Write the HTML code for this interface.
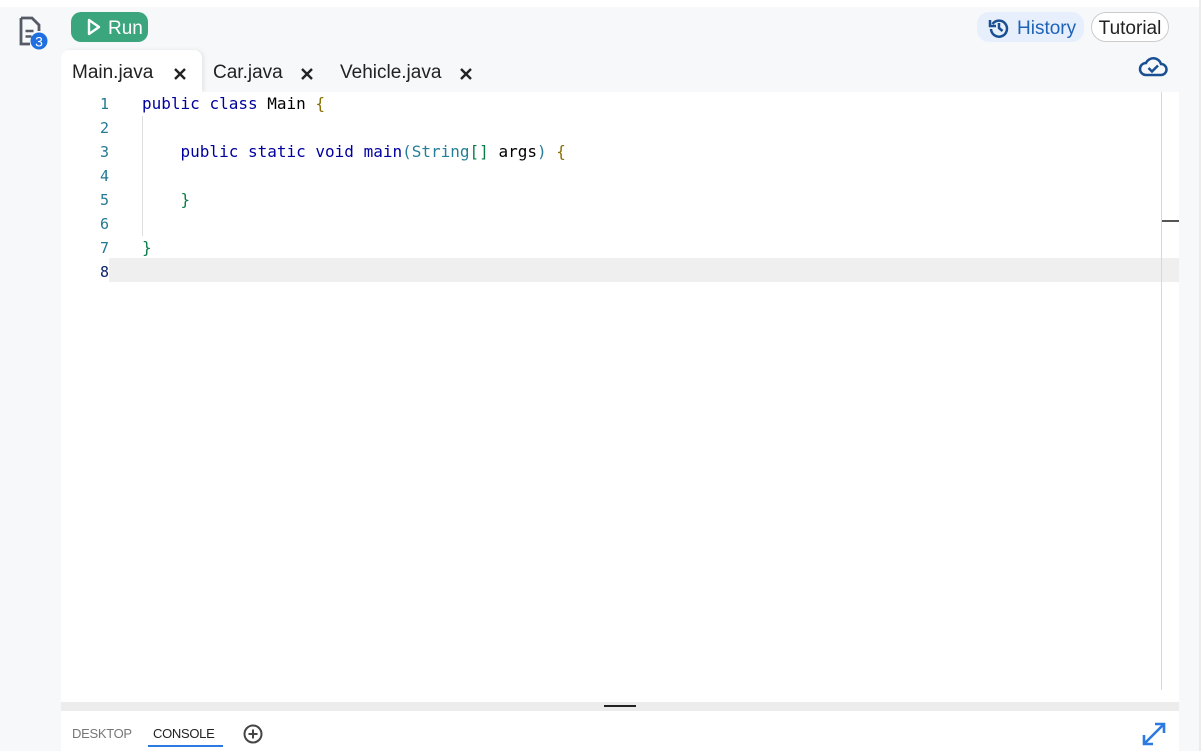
<!DOCTYPE html>
<html><head><style>
*{margin:0;padding:0;box-sizing:border-box}
body{width:1201px;height:751px;position:relative;background:#fff;font-family:"Liberation Sans",sans-serif;overflow:hidden}
.bg{position:absolute;left:0;top:7px;width:1199px;height:744px;background:#f7f8fa}
.rline{position:absolute;left:1199px;top:0;width:2px;height:751px;background:#ececec}
.editor{position:absolute;left:61px;top:92px;width:1118px;height:610px;background:#fff}
.tab{position:absolute;top:50px;height:42px;font-size:19px;color:#222;line-height:46px}
.code{position:absolute;font-family:"DejaVu Sans Mono","Liberation Mono",monospace;font-size:16px;line-height:24px;white-space:pre}
.ln{position:absolute;left:61px;width:48px;text-align:right;color:#237893;font-family:"DejaVu Sans Mono",monospace;font-size:15px;line-height:24px}
.k{color:#0000a0}.b{color:#8a7000}.t{color:#267f99}.g{color:#0a7d4a}
</style></head><body>
<div class="bg"></div>
<div class="rline"></div>
<!-- file icon -->
<svg style="position:absolute;left:17px;top:16px" width="34" height="36" viewBox="0 0 34 36">
<path d="M4 2h11l7 7v6" fill="none" stroke="#555a66" stroke-width="2.8"/>
<path d="M4 2v26h9" fill="none" stroke="#555a66" stroke-width="2.8"/>
<path d="M8.5 15h8M8.5 20.5h6" stroke="#555a66" stroke-width="2.6"/>
<circle cx="22" cy="25" r="8.5" fill="#1f6fe0"/>
<text x="22" y="30.5" font-size="14" fill="#fff" text-anchor="middle" font-family="Liberation Sans">3</text>
</svg>
<!-- run -->
<div style="position:absolute;left:71px;top:12px;width:77px;height:30px;border-radius:10px;background:#3ba57d;color:#fff;font-size:19px;line-height:33px">
<svg style="position:absolute;left:16px;top:6px" width="14" height="18" viewBox="0 0 14 18"><path d="M2 2L12 9L2 16Z" fill="none" stroke="#fff" stroke-width="2.4" stroke-linejoin="round"/></svg>
<span style="position:absolute;left:37px">Run</span></div>
<!-- history -->
<div style="position:absolute;left:977px;top:12px;width:107px;height:30px;border-radius:12px;background:#e8effc;color:#1e63b8;font-size:19px;line-height:34px">
<svg style="position:absolute;left:11px;top:5px" width="22" height="22" viewBox="0 0 22 22"><path d="M4.5 7A8 8 0 1 1 3 12" fill="none" stroke="#1a4f93" stroke-width="2.5"/><path d="M2 3v6h6" fill="none" stroke="#1a4f93" stroke-width="2.5"/><path d="M11 6v5l3.5 3" fill="none" stroke="#1a4f93" stroke-width="2.5"/></svg>
<span style="position:absolute;left:40px">History</span></div>
<div style="position:absolute;left:1091px;top:12px;width:78px;height:30px;border-radius:15px;background:#fff;border:1px solid #ccc;color:#222;font-size:19px;line-height:32px;text-align:center">Tutorial</div>
<!-- cloud -->
<svg style="position:absolute;left:1138px;top:54px" width="30" height="24" viewBox="0 0 30 24"><path d="M8 21h15a5.5 5.5 0 0 0 0-11 8 8 0 0 0-15-1 6 6 0 0 0 0 12z" fill="none" stroke="#1a4f93" stroke-width="2.5"/><path d="M10.5 14l3.5 3.5 6-6" fill="none" stroke="#1a4f93" stroke-width="2.5"/></svg>
<!-- tabs -->
<div style="position:absolute;left:61px;top:50px;width:141px;height:42px;background:#fff;border-radius:8px 8px 0 0;box-shadow:2px 0 4px rgba(0,0,0,.08)"></div>
<div class="tab" style="left:72px">Main.java</div>
<div class="tab" style="left:213px">Car.java</div>
<div class="tab" style="left:340px">Vehicle.java</div>
<svg style="position:absolute;left:174px;top:68px" width="12" height="12"><path d="M1 1L11 11M11 1L1 11" stroke="#222" stroke-width="2.4"/></svg>
<svg style="position:absolute;left:301px;top:68px" width="12" height="12"><path d="M1 1L11 11M11 1L1 11" stroke="#222" stroke-width="2.4"/></svg>
<svg style="position:absolute;left:460px;top:68px" width="12" height="12"><path d="M1 1L11 11M11 1L1 11" stroke="#222" stroke-width="2.4"/></svg>
<div class="editor"></div>
<div style="position:absolute;left:109px;top:258px;width:1070px;height:24px;background:#efefef"></div>
<div style="position:absolute;left:1161px;top:92px;width:1px;height:598px;background:#d8d8d8"></div>
<div style="position:absolute;left:1162px;top:220px;width:17px;height:2px;background:#555"></div>
<div style="position:absolute;left:142px;top:116px;width:1px;height:120px;background:#ddd"></div>
<div class="ln" style="top:92px">1<br>2<br>3<br>4<br>5<br>6<br>7<br><span style="color:#0b216f">8</span></div>
<div class="code" style="left:142px;top:92px"><span class="k">public</span> <span class="k">class</span> Main <span class="b">{</span>

    <span class="k">public</span> <span class="k">static</span> <span class="k">void</span> <span class="k">main</span><span class="t">(String</span><span class="g">[]</span> args<span class="t">)</span> <span class="b">{</span>

    <span class="g">}</span>

<span class="g">}</span></div>
<!-- divider -->
<div style="position:absolute;left:61px;top:702px;width:1118px;height:9px;background:#ececec"></div>
<div style="position:absolute;left:604px;top:705px;width:32px;height:2px;background:#222"></div>
<div style="position:absolute;left:61px;top:711px;width:1118px;height:40px;background:#fff"></div>
<div style="position:absolute;left:72px;top:726px;font-size:13px;color:#777;letter-spacing:-0.3px">DESKTOP</div>
<div style="position:absolute;left:153px;top:726px;font-size:13px;color:#222;letter-spacing:-0.3px">CONSOLE</div>
<div style="position:absolute;left:148px;top:745px;width:75px;height:2px;background:#2a7ae2"></div>
<svg style="position:absolute;left:242px;top:723px" width="22" height="22" viewBox="0 0 22 22"><circle cx="11" cy="11" r="8.5" fill="none" stroke="#444" stroke-width="2"/><path d="M11 6.5v9M6.5 11h9" stroke="#444" stroke-width="2"/></svg>
<svg style="position:absolute;left:1141px;top:721px" width="26" height="26" viewBox="0 0 26 26"><path d="M3 23L23 3" stroke="#2a7ae2" stroke-width="2.6"/><path d="M14 3h9v9M12 23H3v-9" fill="none" stroke="#2a7ae2" stroke-width="2.6"/></svg>
</body></html>
